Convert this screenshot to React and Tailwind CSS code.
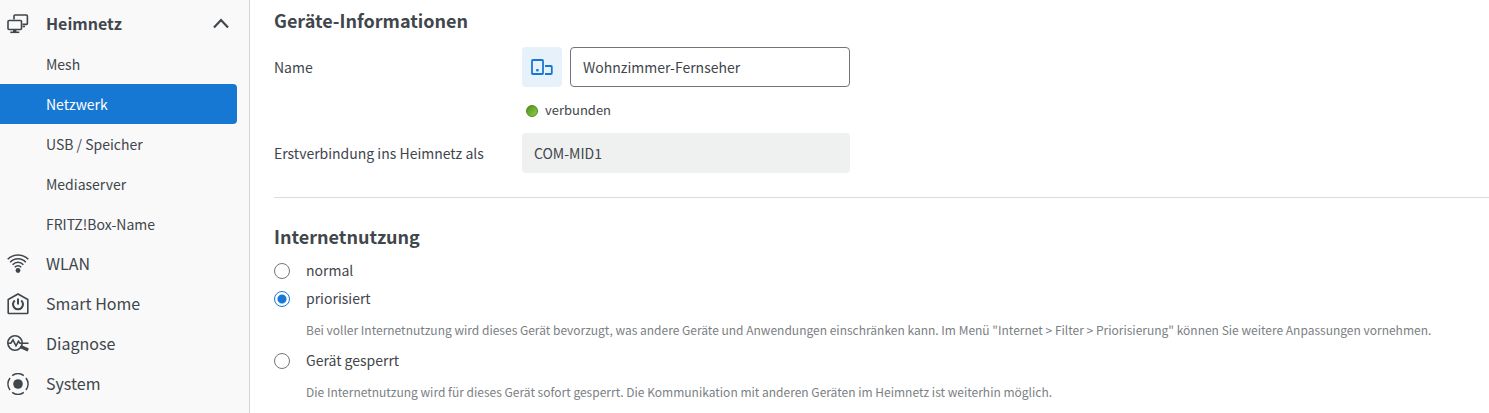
import { useState } from "react";

const iconProps = {
  width: 22,
  height: 22,
  viewBox: "0 0 22 22",
  fill: "none",
  stroke: "currentColor",
  strokeWidth: 1.6,
  "aria-hidden": true,
};

function HomeNetworkIcon() {
  return (
    <svg {...iconProps}>
      <path d="M7 6.500V3q0-1 1-1h11.400q1 0 1 1v7.400q0 1-1 1H15.500" />
      <path d="M15.500 13.500h2.500" />
      <rect x="1" y="7.500" width="13.500" height="9" rx="1" />
      <path d="M7.700 16v3" strokeWidth="3.400" />
      <path d="M3.300 19.300h9" />
    </svg>
  );
}

function WlanIcon() {
  return (
    <svg {...iconProps}>
      <path d="M.7 6.300Q5 2 11 2t10.300 4.300" />
      <path d="M3.200 9.200Q6.500 5.700 11 5.700t7.800 3.500" />
      <path d="M5.600 11.800Q8 9.300 11 9.300t5.400 2.500" />
      <path d="M7.800 14.300Q9.200 12.800 11 12.800t3.200 1.500" />
      <circle cx="11" cy="17.500" r="2.400" fill="currentColor" stroke="none" />
    </svg>
  );
}

function SmartHomeIcon() {
  return (
    <svg {...iconProps}>
      <path d="M1.200 19.700V6.500L11 1l9.800 5.500v13.200q0 .8-.8.800H2q-.8 0-.8-.8z" />
      <path d="M7.800 7.500a5 5 0 1 0 6.400 0" strokeWidth="2" />
      <path d="M11 5.500v6" strokeWidth="2" />
    </svg>
  );
}

function DiagnoseIcon() {
  return (
    <svg {...iconProps}>
      <circle cx="8" cy="10" r="7.200" />
      <path d="M.8 10.300h3L6 6.800l3 6 2.500-4.500 1.500 2h8.500" />
      <path d="M13.500 13.500l7.700 3.500" strokeWidth="3.400" />
    </svg>
  );
}

function SystemIcon() {
  return (
    <svg {...iconProps}>
      <circle cx="11" cy="11" r="4.800" fill="currentColor" stroke="none" />
      <path d="M5.200 2.600a10 10 0 0 1 11.600 0M5.200 19.400a10 10 0 0 0 11.600 0" />
      <path d="M3 5a10 10 0 0 0 0 12M19 5a10 10 0 0 1 0 12" />
    </svg>
  );
}

function DevicesIcon() {
  return (
    <svg {...iconProps} className="text-[#1778d3]">
      <rect x="1" y="4" width="11" height="14" rx=".8" strokeWidth="1.800" />
      <rect x="5.200" y="13" width="2.400" height="2.400" fill="currentColor" stroke="none" />
      <path d="M14 10h6q.8 0 .8.800v6.400q0 .8-.8.800h-6" strokeWidth="1.800" />
    </svg>
  );
}

const subItems = ["Mesh", "Netzwerk", "USB / Speicher", "Mediaserver", "FRITZ!Box-Name"];

const mainItems = [
  { label: "WLAN", Icon: WlanIcon },
  { label: "Smart Home", Icon: SmartHomeIcon },
  { label: "Diagnose", Icon: DiagnoseIcon },
  { label: "System", Icon: SystemIcon },
];

const usageOptions = [
  { id: "normal", label: "normal" },
  {
    id: "priorisiert",
    label: "priorisiert",
    hint: 'Bei voller Internetnutzung wird dieses Gerät bevorzugt, was andere Geräte und Anwendungen einschränken kann. Im Menü "Internet > Filter > Priorisierung" können Sie weitere Anpassungen vornehmen.',
  },
  {
    id: "gesperrt",
    label: "Gerät gesperrt",
    hint: "Die Internetnutzung wird für dieses Gerät sofort gesperrt. Die Kommunikation mit anderen Geräten im Heimnetz ist weiterhin möglich.",
  },
];

function Sidebar() {
  const [active, setActive] = useState("Netzwerk");
  const [open, setOpen] = useState(true);
  return (
    <nav className="w-[250px] shrink-0 border-r border-[#d3d5d6] bg-[#f9f9f9] pt-1">
      <button
        type="button"
        aria-expanded={open}
        onClick={() => setOpen(!open)}
        className="flex h-10 w-full items-center gap-4 pr-5 pl-[7px] text-left text-base font-bold"
      >
        <HomeNetworkIcon />
        <span className="grow pb-0.5 pl-px">Heimnetz</span>
        <svg width="16" height="16" viewBox="0 0 16 16" fill="none" stroke="currentColor" strokeWidth="2.200" aria-hidden="true">
          <path d="M1 11.500l7-7.500 7 7.500" />
        </svg>
      </button>
      {open && (
        <ul>
          {subItems.map((label) => (
            <li key={label} className="pr-3">
              <a
                href="#"
                onClick={() => setActive(label)}
                aria-current={label === active ? "page" : undefined}
                className={
                  label === active
                    ? "flex h-10 items-center rounded-r bg-[#1778d3] pl-[46px] text-sm text-white"
                    : "flex h-10 items-center pl-[46px] text-sm"
                }
              >
                {label}
              </a>
            </li>
          ))}
        </ul>
      )}
      <ul>
        {mainItems.map(({ label, Icon }) => (
          <li key={label}>
            <a href="#" className="flex h-10 items-center gap-4 pl-[7px] text-base">
              <Icon />
              <span className="pb-0.5 pl-px">{label}</span>
            </a>
          </li>
        ))}
      </ul>
    </nav>
  );
}

export default function App() {
  const [name, setName] = useState("Wohnzimmer-Fernseher");
  const [usage, setUsage] = useState("priorisiert");
  return (
    <div className="flex min-h-screen bg-white font-['Noto_Sans_CJK_SC','Noto_Sans',sans-serif] text-sm text-[#3f464c]">
      <Sidebar />
      <main className="min-w-0 grow pt-2 pl-6">
        <section className="border-b border-[#d9dbdc] pb-6">
          <h2 className="text-lg leading-6 font-bold">Geräte-Informationen</h2>
          <div className="mt-[15px] flex items-center">
            <label htmlFor="device-name" className="w-[248px] shrink-0">
              Name
            </label>
            <div className="flex w-[328px] gap-2">
              <button
                type="button"
                aria-label="Gerätesymbol ändern"
                className="flex size-10 shrink-0 items-center justify-center rounded bg-[#e6f1fa]"
              >
                <DevicesIcon />
              </button>
              <input
                id="device-name"
                type="text"
                value={name}
                onChange={(e) => setName(e.target.value)}
                className="h-10 min-w-0 grow rounded border border-[#6f7579] bg-white px-3"
              />
            </div>
          </div>
          <div className="mt-3 ml-[252px] flex h-6 items-center gap-[7px] text-[13px]">
            <span className="size-3 rounded-full border border-[#4e8a14] bg-linear-to-br from-[#4f9011] to-[#8fce4e]" />
            <span className="pb-0.5">verbunden</span>
          </div>
          <div className="mt-[10px] flex items-center">
            <label htmlFor="first-name" className="w-[248px] shrink-0">
              Erstverbindung ins Heimnetz als
            </label>
            <input
              id="first-name"
              type="text"
              readOnly
              value="COM-MID1"
              className="h-10 w-[328px] rounded bg-[#eff1f0] px-3"
            />
          </div>
        </section>
        <section className="pt-[26px]">
          <h2 className="text-lg leading-6 font-bold">Internetnutzung</h2>
          <div className="mt-[9px]">
            {usageOptions.map(({ id, label, hint }) => (
              <div key={id}>
                <label className="flex h-7 items-center gap-4">
                  <input
                    type="radio"
                    name="usage"
                    checked={usage === id}
                    onChange={() => setUsage(id)}
                    className="size-4 shrink-0 appearance-none rounded-full border border-[#6f7579] bg-white checked:border-[#1778d3] checked:bg-[radial-gradient(circle,#1778d3_4px,white_5px)]"
                  />
                  <span className="pb-0.5">{label}</span>
                </label>
                {hint && <p className="py-[7px] pl-8 text-xs leading-5 text-[#7b8084]">{hint}</p>}
              </div>
            ))}
          </div>
        </section>
      </main>
    </div>
  );
}
